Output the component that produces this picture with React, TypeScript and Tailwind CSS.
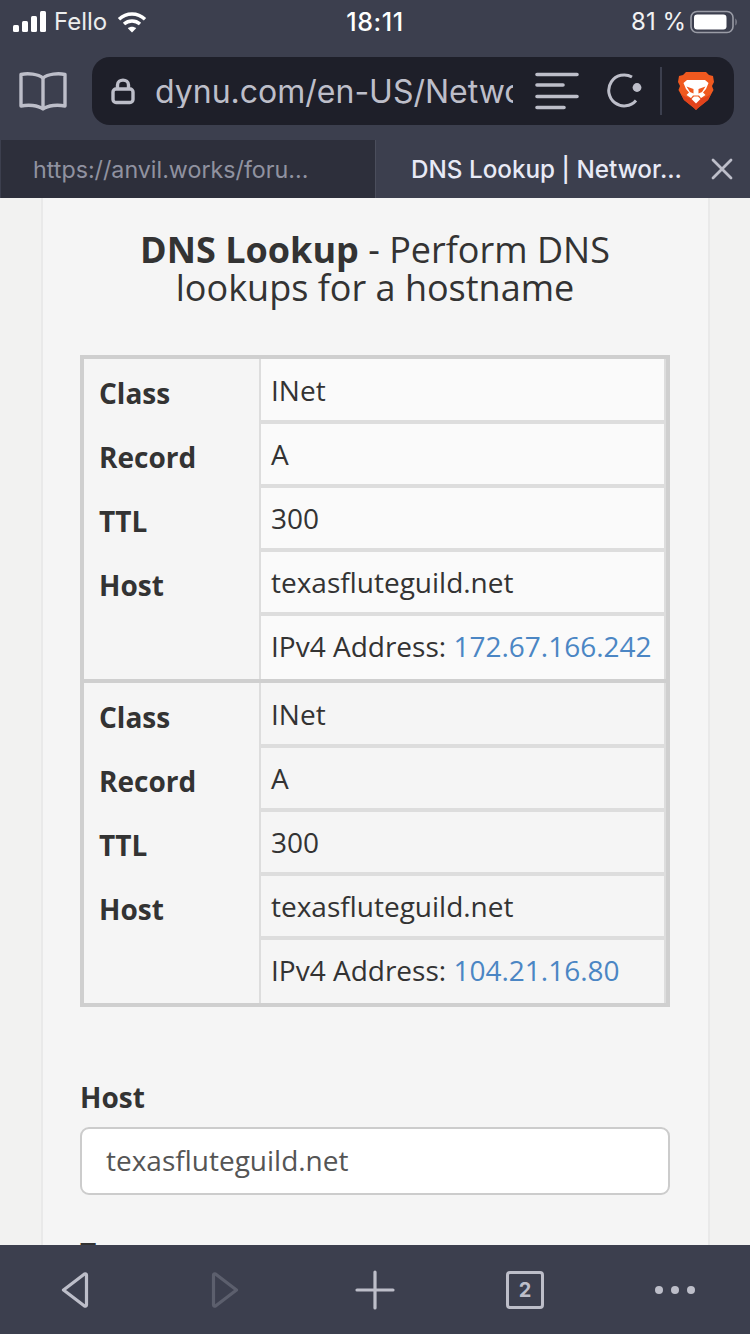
import React from "react";

const sans = "font-['Inter','Noto_Sans',sans-serif]";

function Signal() {
  return (
    <svg width="34" height="22" viewBox="0 0 34 22" fill="#fff">
      <rect x="0" y="14" width="6" height="7" rx="1.5" />
      <rect x="9" y="10" width="6" height="11" rx="1.5" />
      <rect x="18" y="5" width="6" height="16" rx="1.5" />
      <rect x="27" y="0" width="6" height="21" rx="1.5" />
    </svg>
  );
}

function Wifi() {
  return (
    <svg width="30" height="22" viewBox="0 0 30 22" fill="none" stroke="#fff" strokeWidth="3.4">
      <path d="M2 8.2C9.5 1.2 20.5 1.2 28 8.2" />
      <path d="M7 13C11.6 9 18.4 9 23 13" />
      <path d="M15 21.5L10.8 17.2C13.2 15.2 16.8 15.2 19.2 17.2Z" fill="#fff" stroke="none" />
    </svg>
  );
}

function Battery() {
  return (
    <svg width="48" height="24" viewBox="0 0 48 24" fill="none">
      <rect x="1" y="1.5" width="42" height="21" rx="6" stroke="#9a9ca6" strokeWidth="1.6" />
      <rect x="4" y="4.5" width="32.5" height="15" rx="3.2" fill="#fff" />
      <path d="M45.5 8.5C47 9.5 47 14.5 45.5 15.5Z" fill="#9a9ca6" />
    </svg>
  );
}

function Book() {
  return (
    <svg width="50" height="40" viewBox="0 0 50 40" fill="none" stroke="#bdbec9" strokeWidth="3.4" strokeLinejoin="round">
      <path d="M25 7C20 3 10 2 3 3.5V35C10 33.5 20 34 25 38C30 34 40 33.5 47 35V3.5C40 2 30 3 25 7Z" />
      <path d="M25 7V38" />
    </svg>
  );
}

function Lock() {
  return (
    <svg width="24" height="28" viewBox="0 0 24 28" fill="none" stroke="#bdbec9" strokeWidth="3.4">
      <path d="M6.5 12V8C6.5 1.5 17.5 1.5 17.5 8V12" />
      <rect x="2" y="12" width="20" height="13.5" rx="3" />
    </svg>
  );
}

function Reader() {
  return (
    <svg width="44" height="38" viewBox="0 0 44 38" stroke="#bdbec9" strokeWidth="3.6" strokeLinecap="round">
      <path d="M2 2.5H42M2 13H28M2 24.5H42M2 35.5H29" />
    </svg>
  );
}

function Reload() {
  return (
    <svg width="36" height="36" viewBox="0 0 36 36" fill="none">
      <path d="M25 4A15.5 15.5 0 1 0 29 27.5" stroke="#bdbec9" strokeWidth="3" />
      <circle cx="30" cy="14.5" r="4.4" fill="#bdbec9" />
    </svg>
  );
}

function Brave() {
  return (
    <svg width="36" height="38" viewBox="0 0 36 38">
      <path d="M8 0H28L31 3L35 4L36 10L34 14L35.5 18L30 28L20 36L18 38L16 36L6 28L0.5 18L2 14L0 10L1 4L5 3Z" fill="#f0591f" />
      <path d="M18 38L16 36L6 28L3 22C10 28 26 28 33 22L30 28L20 36Z" fill="#e2431c" />
      <path d="M9 8H27L30.5 11L28 17L25 20.5L27.5 23L23 26L21 23.5H15L13 26L8.5 23L11 20.5L8 17L5.5 11Z" fill="#fff" />
      <path d="M8.5 14.5L15.5 17V21.5L12 20ZM27.5 14.5L20.5 17V21.5L24 20Z" fill="#f0591f" />
      <path d="M13.5 27L16 24.5H20L22.5 27L18 31.5Z" fill="#fff" />
    </svg>
  );
}

function Row({ v, last, ip }: { v?: string; last?: boolean; ip?: string }) {
  return (
    <div className={`flex items-center pl-[10px] ${last ? "h-[63px] pb-[4px]" : "h-[64px] border-b-[4px] border-[#dddddd]"}`}>
      {ip ? (
        <span>
          IPv4 Address: <span className="text-[#4b86c4]">{ip}</span>
        </span>
      ) : (
        v
      )}
    </div>
  );
}

function Group({ ip, bg }: { ip: string; bg: string }) {
  const labels = ["Class", "Record", "TTL", "Host"];
  return (
    <div className="flex h-[320px]">
      <div className="w-[177px] border-r-2 border-[#dddddd] pl-[15px] font-bold">
        {labels.map((l) => (
          <div key={l} className="h-[64px] flex items-center pt-[4px]">
            {l}
          </div>
        ))}
      </div>
      <div className={`flex-1 pt-[1px] border-r-2 border-[#dddddd] ${bg}`}>
        <Row v="INet" />
        <Row v="A" />
        <Row v="300" />
        <Row v="texasfluteguild.net" />
        <Row ip={ip} last />
      </div>
    </div>
  );
}

export default function App() {
  return (
    <div className="w-[750px] h-[1334px] overflow-hidden flex flex-col bg-[#3c3f4e]">
      <header className={`${sans} h-[140px] shrink-0 bg-[#3c3f4e]`}>
        <div className="h-[42px] pl-[13px] pr-[12px] pt-[1px] relative flex items-center text-white text-[24px]">
          <Signal />
          <span className="ml-[7px] text-[#eceded]">Fello</span>
          <span className="ml-[10px]">
            <Wifi />
          </span>
          <span className="absolute left-0 right-0 text-center top-[4px] font-medium text-[25px] tracking-[0.6px]">18:11</span>
          <span className="ml-auto mr-[4px] text-[#f2f2f2]">81 %</span>
          <Battery />
        </div>
        <div className="flex items-center h-[98px] pb-[14px] pl-[18px] pr-[16px] pt-[14px]">
          <Book />
          <div className="ml-[24px] flex-1 h-[68px] rounded-[18px] bg-[#1e1f29] flex items-center pl-[19px] text-[#bdbec9]">
            <Lock />
            <span className="ml-[20px] w-[358px] pt-[2px] overflow-hidden whitespace-nowrap text-[32px] leading-none">dynu.com/en-US/Network</span>
            <span className="ml-[22px] flex">
              <Reader />
            </span>
            <span className="ml-[28px] flex">
              <Reload />
            </span>
            <span className="ml-[17px] w-[2px] h-[48px] bg-[#3c3f4e]" />
            <span className="ml-[16px] flex">
              <Brave />
            </span>
          </div>
        </div>
      </header>

      <nav className={`${sans} h-[58px] shrink-0 flex`}>
        <div className="w-[375px] ml-[1px] bg-[#2d2f3b] border-r border-[#4b4e5c] flex items-center pl-[32px] pt-[2px] text-[#9092a0] text-[23.25px]">
          https://anvil.works/foru...
        </div>
        <div className="flex-1 flex items-center pl-[35px] pr-[17px] text-[#e8eaf6] font-medium text-[24.25px]">
          <span className="pt-[2px]">DNS Lookup | Networ...</span>
          <svg className="ml-auto" width="22" height="22" viewBox="0 0 22 22" stroke="#bdbec9" strokeWidth="2.8" strokeLinecap="round">
            <path d="M2 2L20 20M20 2L2 20" />
          </svg>
        </div>
      </nav>

      <main className="flex-1 min-h-0 overflow-hidden bg-[#f2f2f1] font-['Open_Sans',sans-serif] text-[#333333] text-[28px]">
        <div className="ml-[41px] w-[669px] h-[1100px] border-x-2 border-[#e9e9e9] bg-[#f5f5f5] pl-[37px] pr-[38px]">
          <h1 className="pt-[33px] text-center text-[36px] leading-[38px] font-normal whitespace-nowrap">
            <b>DNS Lookup</b> - Perform DNS
            <br />
            lookups for a hostname
          </h1>
          <div className="mt-[48px] w-[590px] border-[4px] border-[#cfcfcf]">
            <Group ip="172.67.166.242" bg="bg-[#fafafa]" />
            <div className="h-[4px] bg-[#cfcfcf]" />
            <Group ip="104.21.16.80" bg="bg-[#f5f5f5]" />
          </div>
          <label className="block mt-[71px] h-[38px] leading-[38px] font-bold">Host</label>
          <div className="mt-[11px] w-[590px] h-[68px] rounded-[9px] border-2 border-[#cccccc] bg-white flex items-center pl-[24px] text-[#555555] pb-[2px]">
            texasfluteguild.net
          </div>
          <label className="block mt-[39px] font-bold leading-[38px]">Type</label>
        </div>
      </main>

      <footer className="h-[89px] shrink-0 bg-[#3c3f4e] flex items-center relative">
        <div className="flex w-full items-center">
          <div className="w-[150px] flex justify-center">
            <svg width="28" height="36" viewBox="0 0 28 36" fill="none" stroke="#bdbec9" strokeWidth="3.2" strokeLinejoin="round">
              <path d="M25.5 3C25.5 1.8 24.5 1.5 23.5 2L2.5 18L23.5 34C24.5 34.5 25.5 34.2 25.5 33Z" />
            </svg>
          </div>
          <div className="w-[150px] flex justify-center">
            <svg width="28" height="36" viewBox="0 0 28 36" fill="none" stroke="#5c5f6d" strokeWidth="3.2" strokeLinejoin="round">
              <path d="M2.5 3C2.5 1.8 3.5 1.5 4.5 2L25.5 18L4.5 34C3.5 34.5 2.5 34.2 2.5 33Z" />
            </svg>
          </div>
          <div className="w-[150px] flex justify-center">
            <svg width="40" height="40" viewBox="0 0 40 40" stroke="#bdbec9" strokeWidth="3.2" strokeLinecap="round">
              <path d="M20 2V38M2 20H38" />
            </svg>
          </div>
          <div className="w-[150px] flex justify-center">
            <div className={`${sans} w-[38px] h-[38px] rounded-[4px] border-[3px] border-[#bdbec9] text-[#bdbec9] flex items-center justify-center text-[20px] font-bold`}>2</div>
          </div>
          <div className="w-[150px] flex justify-center gap-[8px]">
            <span className="w-[8px] h-[8px] rounded-full bg-[#bdbec9]" />
            <span className="w-[8px] h-[8px] rounded-full bg-[#bdbec9]" />
            <span className="w-[8px] h-[8px] rounded-full bg-[#bdbec9]" />
          </div>
        </div>
      </footer>
    </div>
  );
}
